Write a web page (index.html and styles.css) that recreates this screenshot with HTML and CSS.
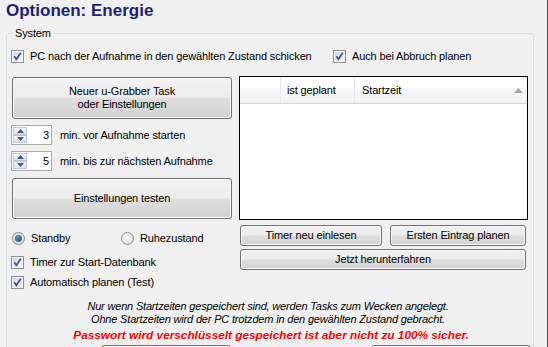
FILE: index.html
```html
<!DOCTYPE html>
<html>
<head>
<meta charset="utf-8">
<link rel="stylesheet" href="styles.css">
</head>
<body>
<div class="window">
  <h1 class="title">Optionen: Energie</h1>
  <fieldset class="group">
    <legend>System</legend>
    <div class="row1">
      <label class="check first"><span class="cb"><svg width="11" height="11" viewBox="0 0 11 11"><path d="M2.3 5.2 L4.4 8.2 L8.8 1.8" fill="none" stroke="#3f4f95" stroke-width="1.7"/></svg></span>PC nach der Aufnahme in den gewählten Zustand schicken</label>
      <label class="check"><span class="cb"><svg width="11" height="11" viewBox="0 0 11 11"><path d="M2.3 5.2 L4.4 8.2 L8.8 1.8" fill="none" stroke="#3f4f95" stroke-width="1.7"/></svg></span>Auch bei Abbruch planen</label>
    </div>
    <div class="main">
      <div class="left">
        <button class="btn btn-big">Neuer u-Grabber Task<br>oder Einstellungen</button>
        <div class="spin-row">
          <span class="spin">
            <span class="spin-btns">
              <span class="sb"><svg width="7" height="4" viewBox="0 0 7 4"><path d="M0 4 L3.5 0 L7 4Z" fill="#3d5a86"/></svg></span>
              <span class="sb"><svg width="7" height="4" viewBox="0 0 7 4"><path d="M0 0 L3.5 4 L7 0Z" fill="#3d5a86"/></svg></span>
            </span>
            <span class="val">3</span>
          </span>
          <span>min. vor Aufnahme starten</span>
        </div>
        <div class="spin-row">
          <span class="spin">
            <span class="spin-btns">
              <span class="sb"><svg width="7" height="4" viewBox="0 0 7 4"><path d="M0 4 L3.5 0 L7 4Z" fill="#3d5a86"/></svg></span>
              <span class="sb"><svg width="7" height="4" viewBox="0 0 7 4"><path d="M0 0 L3.5 4 L7 0Z" fill="#3d5a86"/></svg></span>
            </span>
            <span class="val">5</span>
          </span>
          <span>min. bis zur nächsten Aufnahme</span>
        </div>
        <button class="btn btn-test">Einstellungen testen</button>
        <div class="radios">
          <label class="radio r1"><span class="rb on"><span class="dot"></span></span>Standby</label>
          <label class="radio"><span class="rb"></span>Ruhezustand</label>
        </div>
        <label class="check c-timer"><span class="cb"><svg width="11" height="11" viewBox="0 0 11 11"><path d="M2.3 5.2 L4.4 8.2 L8.8 1.8" fill="none" stroke="#3f4f95" stroke-width="1.7"/></svg></span>Timer zur Start-Datenbank</label>
        <label class="check c-auto"><span class="cb"><svg width="11" height="11" viewBox="0 0 11 11"><path d="M2.3 5.2 L4.4 8.2 L8.8 1.8" fill="none" stroke="#3f4f95" stroke-width="1.7"/></svg></span>Automatisch planen (Test)</label>
      </div>
      <div class="right">
        <div class="list">
          <div class="lv-head">
            <div class="col c0"></div>
            <div class="col c1">ist geplant</div>
            <div class="col c2"><span>Startzeit</span><svg class="sort" width="9" height="5" viewBox="0 0 9 5"><path d="M0 5 L4.5 0 L9 5Z" fill="#a6a6a6"/></svg></div>
          </div>
        </div>
        <div class="btn-row">
          <button class="btn b-timer">Timer neu einlesen</button>
          <button class="btn b-first">Ersten Eintrag planen</button>
        </div>
        <button class="btn b-shutdown">Jetzt herunterfahren</button>
      </div>
    </div>
    <div class="notes">
      <div class="note">Nur wenn Startzeiten gespeichert sind, werden Tasks zum Wecken angelegt.</div>
      <div class="note">Ohne Startzeiten wird der PC trotzdem in den gewählten Zustand gebracht.</div>
      <div class="warn">Passwort wird verschlüsselt gespeichert ist aber nicht zu 100% sicher.</div>
    </div>
    <div class="bottom-btns">
      <button class="btn bb1"></button>
      <button class="btn bb2"></button>
    </div>
  </fieldset>
</div>
</body>
</html>
```

FILE: styles.css
```css
html, body {
  margin: 0;
  padding: 0;
  background: #f0f0f0;
}

body {
  font-family: "Liberation Sans", Arial, sans-serif;
  font-size: 11px;
  letter-spacing: -0.13px;
  color: #000;
}

.window {
  width: 547px;
  height: 347px;
  overflow: hidden;
  background: #f0f0f0;
  border-right: 1px solid #4d4d4d;
}

.title {
  margin: 0;
  padding-left: 6px;
  font-size: 17px;
  font-weight: bold;
  line-height: 22px;
  letter-spacing: 0;
  color: #1f1f72;
}

.group {
  margin: 4px 0 0 6px;
  width: 528px;
  height: 400px;
  box-sizing: border-box;
  border: 1px solid #d5dfe5;
  border-radius: 3px;
  padding: 0;
  min-width: 0;
}

.group legend {
  margin-left: 6px;
  padding: 0 2px;
  font-size: 11px;
  line-height: 14px;
}

.row1 {
  display: flex;
  align-items: center;
  height: 13px;
  margin: 10px 0 0 4px;
}

.check {
  display: flex;
  align-items: center;
  gap: 6px;
  height: 13px;
  line-height: 13px;
  white-space: nowrap;
}

.check.first {
  width: 322px;
}

.cb {
  width: 13px;
  height: 13px;
  box-sizing: border-box;
  border: 1px solid #8e8f8f;
  background: linear-gradient(135deg, #cfd3da 0%, #e9ebee 60%, #f7f8f9 100%);
  box-shadow: inset 0 0 0 1px #f6f6f6;
  display: flex;
  align-items: center;
  justify-content: center;
  flex: none;
}

.cb svg {
  display: block;
}

.main {
  display: flex;
  gap: 7px;
  margin: 13px 0 0 4px;
}

.left {
  width: 221px;
  display: flex;
  flex-direction: column;
}

.right {
  width: 289px;
  display: flex;
  flex-direction: column;
}

.btn {
  display: block;
  box-sizing: border-box;
  border: 1px solid #707070;
  border-radius: 3px;
  background: linear-gradient(#f3f3f3 0%, #ececec 48%, #dedede 52%, #d1d1d1 100%);
  box-shadow: inset 0 0 0 1px #fbfbfb;
  font-family: "Liberation Sans", Arial, sans-serif;
  font-size: 11px;
  letter-spacing: -0.13px;
  line-height: 13px;
  color: #000;
  padding: 0;
  text-align: center;
}

.btn-big {
  margin: 1px 0 0 1px;
  width: 220px;
  height: 42px;
}

.spin-row {
  display: flex;
  align-items: center;
  gap: 8px;
  height: 20px;
  margin-top: 6px;
  white-space: nowrap;
}

.spin {
  width: 41px;
  height: 20px;
  box-sizing: border-box;
  border: 1px solid #aaaaaa;
  background: #fff;
  display: flex;
  align-items: center;
  justify-content: space-between;
  padding: 1px;
  flex: none;
}

.spin-btns {
  display: flex;
  flex-direction: column;
  width: 14px;
  height: 16px;
}

.sb {
  height: 8px;
  box-sizing: border-box;
  border: 1px solid #c3c8d0;
  background: linear-gradient(#f4f6f9, #dde3eb);
  display: flex;
  align-items: center;
  justify-content: center;
}

.sb svg {
  display: block;
}

.val {
  font-size: 11px;
  line-height: 13px;
  padding-right: 1px;
}

.btn-test {
  margin: 7px 0 0 1px;
  width: 220px;
  height: 41px;
}

.radios {
  display: flex;
  align-items: center;
  height: 13px;
  margin: 13px 0 0 1px;
}

.radio {
  display: flex;
  align-items: center;
  gap: 6px;
  height: 13px;
  line-height: 13px;
}

.radio.r1 {
  width: 109px;
}

.rb {
  width: 13px;
  height: 13px;
  box-sizing: border-box;
  border: 1px solid #8a8a8a;
  border-radius: 50%;
  background: radial-gradient(circle at 40% 40%, #ffffff 0%, #e6e6e6 55%, #c9c9c9 100%);
  display: flex;
  align-items: center;
  justify-content: center;
  flex: none;
}

.rb.on {
  background: radial-gradient(circle, #f4f4f4 0%, #dcdcdc 100%);
}

.dot {
  width: 5px;
  height: 5px;
  border-radius: 50%;
  background: radial-gradient(circle at 40% 35%, #63a4d6 0%, #1e5a8e 55%, #0f2f4d 100%);
  box-shadow: 0 0 0 1px #3a6f9a;
}

.c-timer {
  margin-top: 11px;
}

.c-auto {
  margin-top: 7px;
}

.list {
  height: 144px;
  box-sizing: border-box;
  border: 1px solid #000;
  background: #fff;
}

.lv-head {
  display: flex;
  height: 27px;
  box-sizing: border-box;
  border-bottom: 1px solid #d5d5d5;
  background: linear-gradient(#ffffff 0%, #ffffff 40%, #f7f8f9 42%, #f2f3f5 100%);
}

.col {
  box-sizing: border-box;
  line-height: 26px;
  white-space: nowrap;
}

.c0 {
  width: 41px;
  border-right: 1px solid #e3e6ea;
}

.c1 {
  width: 74px;
  padding-left: 6px;
  border-right: 1px solid #e3e6ea;
}

.c2 {
  flex: 1;
  padding: 0 4px 0 7px;
  display: flex;
  align-items: center;
  justify-content: space-between;
}

.sort {
  display: block;
}

.btn-row {
  display: flex;
  gap: 8px;
  margin: 5px 0 0 1px;
}

.b-timer {
  width: 142px;
  height: 21px;
}

.b-first {
  width: 136px;
  height: 21px;
}

.b-shutdown {
  margin: 3px 0 0 1px;
  width: 286px;
  height: 21px;
}

.notes {
  margin-top: 11px;
  padding-right: 4px;
  text-align: center;
}

.note {
  font-style: italic;
  line-height: 13px;
  letter-spacing: -0.18px;
}

.warn {
  margin-top: 3px;
  padding-left: 6px;
  font-size: 11.8px;
  font-style: italic;
  font-weight: bold;
  line-height: 13px;
  letter-spacing: 0;
  color: #ff0000;
}

.bottom-btns {
  display: flex;
  gap: 140px;
  margin: 3px 0 0 94px;
}

.bb1 {
  width: 130px;
  height: 23px;
}

.bb2 {
  width: 160px;
  height: 23px;
}
```
